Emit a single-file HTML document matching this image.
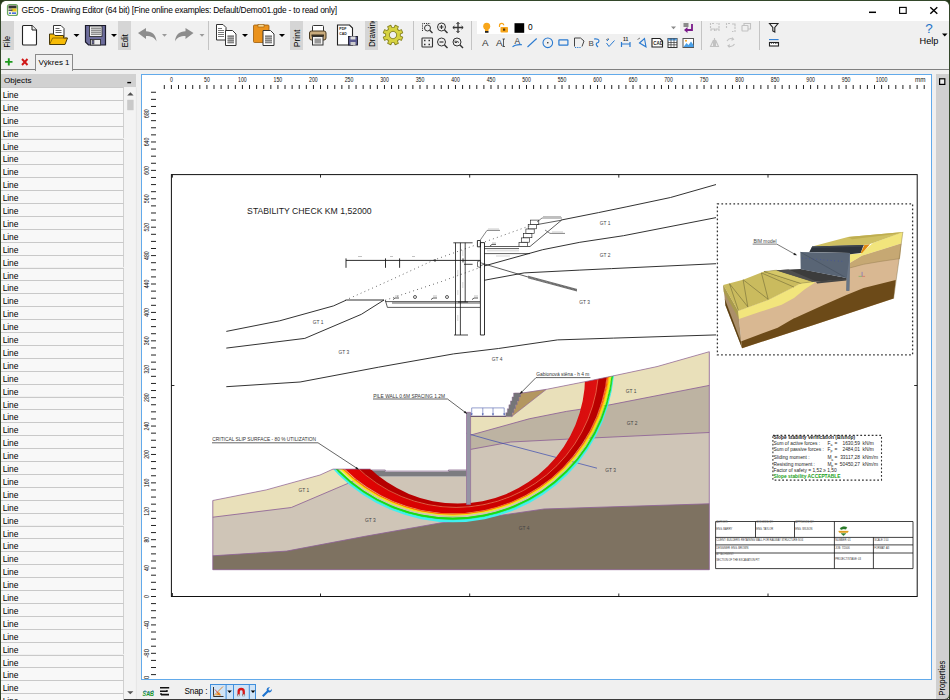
<!DOCTYPE html>
<html><head><meta charset="utf-8"><title>GEO5 - Drawing Editor</title>
<style>
html,body{margin:0;padding:0;background:#263a1a;}
body{width:950px;height:700px;overflow:hidden;font-family:"Liberation Sans",sans-serif;}
#win{position:absolute;left:0;top:0;width:950px;height:700px;overflow:hidden;}
#winbg{position:absolute;left:1px;top:1px;width:948px;height:698px;background:#f0f0f0;border-radius:5px 5px 4px 4px;}
#title{position:absolute;left:1px;top:1px;width:948px;height:20px;background:#fff;border-radius:5px 5px 0 0;}
#title .t{position:absolute;left:20.600px;top:4.300px;font-size:8.400px;letter-spacing:-0.200px;color:#000;white-space:nowrap}
.abs{position:absolute}
.vlabel{position:absolute;background:#d5d5d5;width:13px;}
.vlabel span{position:absolute;left:50%;top:50%;transform:translate(-50%,-50%) rotate(-90deg);font-size:8.2px;color:#000;white-space:nowrap;}
.sep{position:absolute;width:1px;background:#c4c4c4;}
#tabline{position:absolute;left:1px;top:68.800px;width:948px;height:1.200px;background:#808080;}
#tab{white-space:nowrap;position:absolute;left:35px;top:54px;width:36px;height:16px;background:#f1f1f1;border:1px solid #8a8a8a;border-bottom:none;font-size:8px;line-height:15.500px;text-align:center;color:#000}
#objhdr{position:absolute;left:1px;top:74px;width:135.400px;height:13.400px;background:#d1d1d1;font-size:8.100px;line-height:13px;color:#000;}
#objhdr span{position:absolute;left:3px;top:0}
#list{position:absolute;left:1px;top:0;width:124px;height:700px;}
.row{position:absolute;left:0;width:123px;height:12.9px;box-sizing:border-box;border-top:1.5px solid #c9c9c9;background:#f8f8f8;font-size:8.500px;letter-spacing:-0.150px;line-height:14.400px;padding-left:1.800px;color:#000;border-right:1px solid #d0d0d0;overflow:hidden}
#cvbox{position:absolute;left:140.500px;top:74px;width:789.400px;height:604.400px;background:#fff;border:1.5px solid #62aaea;}
#cv{position:absolute;left:0;top:0;}
.rl{font-family:"Liberation Sans",sans-serif;font-size:6.3px;fill:#111}
#props{position:absolute;left:935.5px;top:74px;width:13.5px;height:625px;background:#d0d0d0;}
#status{position:absolute;left:136px;top:681px;width:800px;height:18px;background:#f0f0f0}

</style></head><body>
<div id="win">
<div id="winbg"></div>
<div id="title"><div class="t">GEO5 - Drawing Editor (64 bit) [Fine online examples: Default/Demo01.gde - to read only]</div></div>
<div id="tabline"></div>
<div id="tab">Výkres 1</div>
<div id="objhdr"><span>Objects</span></div>
<div id="cvbox"></div>
<div id="props"></div>
<div id="status"></div>
<div class="abs" style="left:184.500px;top:686.500px;font-size:8.200px;letter-spacing:-0.150px;color:#000;white-space:nowrap">Snap :</div>
<div class="abs" style="left:209.500px;top:683.500px;width:46.500px;height:16px;background:#cfe3f6;border:1px solid #3f8edc;box-sizing:border-box"></div>
<svg class="abs" style="left:0;top:0;pointer-events:none" width="950" height="700" viewBox="0 0 950 700">
<!-- list scrollbar -->
<rect x="124" y="87.500" width="12.400" height="612" fill="#f3f3f3"/><path d="M136.400 87.500v612" stroke="#e2e2e2" stroke-width="0.800"/>
<rect x="127.200" y="99.800" width="6.400" height="10.400" fill="#c9c9c9"/>
<path d="M127.200 95.400l3.200-3.200 3.200 3.200z" fill="#505050"/>
<path d="M127.200 691.200h6.200l-3.100 3z" fill="#555"/>
<path d="M127.300 82.600h3.800" stroke="#000" stroke-width="1.400"/>
<!-- props icon -->
<rect x="939.600" y="78.800" width="5.200" height="5.600" fill="#eee" stroke="#000" stroke-width="1.200"/>
<text transform="translate(945.300 695.700) rotate(-90)" font-family="Liberation Sans" font-size="8.800" fill="#000" textLength="35" lengthAdjust="spacingAndGlyphs">Properties</text>
<!-- status icons -->
<text x="142.600" y="695.600" font-family="Liberation Sans" font-size="8" font-weight="bold" font-style="italic" fill="#1e9a2e" textLength="11.400" lengthAdjust="spacingAndGlyphs">SAB</text>
<path d="M143 692q2-2.500 4 0t4 0t3-0.500" fill="none" stroke="#2a6ab0" stroke-width="0.700"/>
<path d="M160 687.700h9.200M160 691.200h7M161 694.600h8" stroke="#111" stroke-width="1.600"/>
<circle cx="167" cy="691" r="0.900" fill="#111"/><circle cx="161" cy="694" r="0.900" fill="#111"/>
<!-- snap buttons -->
<path d="M226.100 684v15M233.500 684v15M249.300 684v15" stroke="#3f8edc" stroke-width="1"/>
<path d="M213.500 687v9.500h10" fill="none" stroke="#333" stroke-width="1"/>
<path d="M213.500 696l9.500-9.500" fill="none" stroke="#e08020" stroke-width="0.900"/><path d="M215.500 695.200l3.500-3.500 2 3.500z" fill="#f0a020"/>
<path d="M215 689.500l5 6" stroke="#d03030" stroke-width="0.700"/>
<path d="M227.300 690.500h4.600l-2.300 2.600z" fill="#000"/>
<path d="M237.500 696v-4.500a3.700 3.700 0 0 1 7.400 0v4.500h-2.300v-4.300a1.400 1.400 0 0 0-2.800 0v4.300z" fill="#d81818"/>
<rect x="237.500" y="694.300" width="2.300" height="1.700" fill="#eee" stroke="#555" stroke-width="0.300"/><rect x="242.600" y="694.300" width="2.300" height="1.700" fill="#eee" stroke="#555" stroke-width="0.300"/>
<path d="M250.700 690.500h4.600l-2.300 2.600z" fill="#000"/>
<!-- wrench -->
<path d="M262 695.500l4.800-4.800a2.600 2.600 0 0 1 3.200-3.400l-1.600 1.700 0.500 1.300 1.300 0.400 1.600-1.600a2.600 2.600 0 0 1-3.500 3.100l-4.800 4.800z" fill="#1e74d0"/>
<!-- window border -->
<rect x="0.500" y="0.500" width="949" height="699" rx="5" fill="none" stroke="#33472a" stroke-width="1"/>
<path d="M0 699.500h950" stroke="#3a3a3a" stroke-width="1"/>
</svg>

<div class="vlabel" style="left:1px;top:21px;height:29px"></div>
<div class="vlabel" style="left:118px;top:21px;height:29px"></div>
<div class="vlabel" style="left:290px;top:21px;height:29px"></div>
<div class="vlabel" style="left:365px;top:21px;height:29px;overflow:hidden"></div>
<div class="sep" style="left:208px;top:21px;height:29px"></div>
<div class="sep" style="left:413px;top:21px;height:29px"></div>
<div class="sep" style="left:471px;top:21px;height:29px"></div>
<div class="sep" style="left:701px;top:21px;height:29px"></div>
<div class="sep" style="left:759px;top:21px;height:29px"></div>
<div class="abs" style="left:477px;top:21px;width:203px;height:13px;background:#fff"></div>
<div class="abs" style="left:528px;top:22px;font-size:8.3px;color:#000">0</div>
<div class="abs" style="left:911px;top:35.5px;font-size:9.2px;color:#000;width:36px;text-align:center">Help</div>
<div class="abs" style="left:923px;top:20.5px;font-size:13.5px;color:#1e74c8;width:12px;text-align:center">?</div>
<svg class="abs" style="left:0;top:0" width="950" height="72" viewBox="0 0 950 72">
<g font-family="Liberation Sans" font-size="8.800" fill="#000"><text transform="translate(10.300 47.500) rotate(-90)" textLength="11.500" lengthAdjust="spacingAndGlyphs">File</text><text transform="translate(128 47.200) rotate(-90)" textLength="13" lengthAdjust="spacingAndGlyphs">Edit</text><text transform="translate(300 47.200) rotate(-90)" textLength="17.500" lengthAdjust="spacingAndGlyphs">Print</text><text transform="translate(375 47) rotate(-90)" textLength="29.500" lengthAdjust="spacingAndGlyphs" clip-path="url(#dclip)">Drawing</text></g>
<defs><clipPath id="dclip"><rect x="0" y="-10" width="26" height="14"/></clipPath></defs>
<!-- app icon -->
<g>
<rect x="7.5" y="4.5" width="10" height="11" rx="2" fill="#f4f4e0" stroke="#6aa860" stroke-width="1.2"/>
<rect x="8.5" y="5.5" width="8" height="3" fill="#333"/>
<rect x="11.5" y="8.5" width="5" height="3" fill="#e8c820"/>
<rect x="8.5" y="9.5" width="4" height="1.5" fill="#555"/>
<rect x="9" y="12.5" width="2" height="1.3" fill="#2050e0"/><rect x="12" y="12.5" width="4" height="1.3" fill="#2050e0"/>
</g>
<!-- window controls -->
<path d="M869 12.3h7" stroke="#000" stroke-width="1.5"/>
<rect x="899.6" y="7.4" width="6.6" height="6" fill="none" stroke="#000" stroke-width="1.1"/>
<path d="M930.3 7.2l7 6.6M937.3 7.2l-7 6.600" stroke="#000" stroke-width="1.4" fill="none"/>
<!-- new doc -->
<path d="M22.5 26.5q0-1 1-1h8.5l4.5 4.5v14q0 1-1 1h-12q-1 0-1-1z" fill="#fff" stroke="#222" stroke-width="1.1"/>
<path d="M32 25.5v4.5h4.5" fill="#eee" stroke="#222" stroke-width="1"/>
<!-- open folder -->
<path d="M53.5 37v-11.5h7.5l3 3v8.5z" fill="#fff" stroke="#333" stroke-width="1"/>
<path d="M55.5 28.5h4M55.5 30.5h6M55.5 32.5h6" stroke="#555" stroke-width="0.9"/>
<path d="M49.5 44.5v-10.5h4l1.5 1.5h8.5v2.5h4l-2.5 6.5z" fill="#f6bb06" stroke="#4a3a08" stroke-width="1"/>
<path d="M49.8 44l2.8-6h14.5" fill="none" stroke="#7a5c08" stroke-width="0.8"/>
<path d="M73.5 34h6l-3 3z" fill="#000"/>
<!-- save floppy -->
<path d="M85.5 25.5h20v19.5h-17l-3-3z" fill="#6d6d9c" stroke="#1a1a2a" stroke-width="1.2"/>
<rect x="89.5" y="26" width="12.5" height="10.5" fill="#f2f2f2" stroke="#222" stroke-width="0.8"/>
<path d="M91 28.2h10M91 30.2h10M91 32.2h10M91 34.2h10" stroke="#555" stroke-width="0.9"/>
<rect x="90.5" y="39.5" width="10" height="5.5" fill="#eee" stroke="#222" stroke-width="0.8"/>
<rect x="92" y="40.5" width="2" height="3.5" fill="#6d6d9c" stroke="#222" stroke-width="0.5"/>
<path d="M111 34h6l-3 3z" fill="#000"/>
<!-- undo -->
<path d="M138 33l8-5v3.2c6 0 10 3.5 10.500 10.200c-2-4-5-5.500-10.500-5.500v3.200z" fill="#8d8d8d"/>
<path d="M162 34h5l-2.500 2.800z" fill="#9a9a9a"/>
<!-- redo -->
<path d="M193.500 33l-8-5v3.200c-6 0-10 3.500-10.500 10.200c2-4 5-5.500 10.500-5.500v3.200z" fill="#8d8d8d"/>
<path d="M199.500 34h5l-2.500 2.800z" fill="#9a9a9a"/>
<!-- copy -->
<path d="M216.500 24.500h6.500l3 3v12.500h-9.500z" fill="#fff" stroke="#333" stroke-width="1"/>
<path d="M218 28.500h4M218 30.500h6M218 32.500h6M218 34.500h6M218 36.500h6" stroke="#555" stroke-width="0.8"/>
<path d="M225.500 30.500h7l3.500 3.500v11.500h-10.500z" fill="#fff" stroke="#333" stroke-width="1"/>
<rect x="227.500" y="35" width="6.500" height="8.500" fill="#aaa"/>
<path d="M227.500 36.500h6.500M227.500 38.500h6.500M227.500 40.500h6.500M227.500 42.500h6.500" stroke="#666" stroke-width="0.6"/>
<path d="M242 34h6l-3 3z" fill="#000"/>
<!-- paste -->
<rect x="253.500" y="25" width="15.500" height="17.500" rx="1" fill="#ea921c" stroke="#9a5c0a" stroke-width="0.8"/>
<rect x="258" y="24.500" width="6" height="2.500" fill="#f8d890" stroke="#9a5c0a" stroke-width="0.6"/>
<path d="M263 30.500h7.500l3.500 3.500v11.500h-11z" fill="#fff" stroke="#333" stroke-width="1"/>
<rect x="265" y="35" width="7" height="8.500" fill="#b0b0b0"/>
<path d="M265 36.500h7M265 38.500h7M265 40.500h7M265 42.500h7" stroke="#666" stroke-width="0.6"/>
<path d="M279 34h6l-3 3z" fill="#000"/>
<!-- printer -->
<path d="M312.500 32v-5.500q0-1 1-1h9q1 0 1 1v5.500z" fill="#fff" stroke="#333" stroke-width="1"/>
<rect x="309.500" y="31" width="16.500" height="9" rx="2" fill="#c9ab7c" stroke="#4a3a20" stroke-width="1"/>
<rect x="311.500" y="34.500" width="12.500" height="2" fill="#3a3020"/>
<rect x="312.500" y="36.500" width="10.500" height="8.500" fill="#f4f4f4" stroke="#333" stroke-width="1"/>
<rect x="314.500" y="38.500" width="6.500" height="5" fill="#999"/>
<!-- pdf cad -->
<path d="M337.500 25h12l3 3v17h-15z" fill="#fff" stroke="#222" stroke-width="1.1"/>
<text x="339.300" y="30" font-family="Liberation Sans" font-size="4.400" font-weight="bold" fill="#222" textLength="7.200" lengthAdjust="spacingAndGlyphs">PDF</text>
<text x="339.300" y="35" font-family="Liberation Sans" font-size="4.400" font-weight="bold" fill="#222" textLength="7.600" lengthAdjust="spacingAndGlyphs">CAD</text>
<rect x="348.500" y="36.500" width="9" height="8.500" fill="#5a5a90" stroke="#1a1a2a" stroke-width="0.9"/>
<rect x="350.500" y="36.500" width="5" height="3" fill="#ddd"/>
<rect x="350.500" y="42" width="5" height="3" fill="#ccc"/>
<!-- gear -->
<g transform="translate(393 35) rotate(22.5)"><path d="M7.17 -1.84L9.85 -1.72L9.85 1.72L7.17 1.84L6.37 3.77L8.18 5.75L5.75 8.18L3.77 6.37L1.84 7.17L1.72 9.85L-1.72 9.85L-1.84 7.17L-3.77 6.37L-5.75 8.18L-8.18 5.75L-6.37 3.77L-7.17 1.84L-9.85 1.72L-9.85 -1.72L-7.17 -1.84L-6.37 -3.77L-8.18 -5.75L-5.75 -8.18L-3.77 -6.37L-1.84 -7.17L-1.72 -9.85L1.72 -9.85L1.84 -7.17L3.77 -6.37L5.75 -8.18L8.18 -5.75L6.37 -3.77zM3.7 0a3.7 3.7 0 1 0 -7.4 0a3.7 3.7 0 1 0 7.4 0z" fill="#d7d340" stroke="#85811e" stroke-width="0.9" stroke-linejoin="round" fill-rule="evenodd"/></g>
<!-- view icons -->
<g fill="none" stroke="#333" stroke-width="1">
<path d="M422.500 31v-7.500h8" stroke-dasharray="1.2 1"/>
<circle cx="427.500" cy="28" r="3"/><path d="M429.700 30.200l2.800 2.800" stroke-width="1.300"/>
<circle cx="441.500" cy="27" r="4"/><path d="M444.500 30l3 3" stroke-width="1.400"/><path d="M439.500 27h4M441.500 25v4" stroke-width="1.200"/>
<path d="M458 22.500v10M453 27.500h10" stroke-width="1.300"/><path d="M456.500 24l1.500-1.700 1.500 1.700M456.500 31l1.500 1.700 1.500-1.700M454.500 26l-1.700 1.500 1.700 1.500M461.500 26l1.700 1.500-1.700 1.500" stroke-width="1"/>
<rect x="422" y="38" width="10.500" height="9" rx="0.500" stroke-width="1.100"/><path d="M424 40.500h1.500M428.500 40.500h1.500M424 44.500h1.500M428.500 44.500h1.500" stroke-width="1.300"/>
<circle cx="441.500" cy="42" r="4"/><path d="M444.500 45l3 3" stroke-width="1.400"/><path d="M439.500 42h4" stroke-width="1.200"/>
<circle cx="457" cy="42" r="4"/><path d="M460 45l3 3" stroke-width="1.400"/><path d="M455 42.500q1.500-2.500 4 0M455 40.500v2h2" stroke-width="0.900"/>
</g>
<!-- layer row -->
<circle cx="486.700" cy="26.300" r="3.500" fill="#f8a61a"/>
<rect x="485" y="29" width="3.500" height="2" fill="#f8a61a"/>
<rect x="485" y="31" width="3.500" height="1.800" fill="#222"/>
<rect x="500.500" y="27" width="7.500" height="5.500" rx="0.800" fill="#f8a61a"/>
<path d="M499.500 27v-1.500q0-2.200 2.200-2.200q2 0 2 2" fill="none" stroke="#f8a61a" stroke-width="1.200"/>
<rect x="503" y="28.500" width="2.200" height="2.200" fill="#5a3a08"/>
<rect x="514.500" y="23.200" width="9.700" height="9.600" fill="#000"/>
<path d="M671 26.500h5l-2.500 2.800z" fill="#8a8a8a"/>
<g><rect x="683.500" y="23" width="5" height="4" fill="#8a8a8a"/><path d="M692 24v6h-6" fill="none" stroke="#7a1a8a" stroke-width="1.800"/><path d="M687.500 27l-3.500 3 3.500 3z" fill="#7a1a8a"/></g>
<!-- draw row -->
<text x="482" y="46.200" font-family="Liberation Sans" font-size="9.800" fill="#333">A</text>
<text x="496" y="46.200" font-family="Liberation Sans" font-size="9.800" fill="#333">A</text>
<path d="M503.500 39v7.500M502.500 39h2.500M502.500 46.500h2.500" stroke="#333" stroke-width="0.800" fill="none"/>
<text x="514.500" y="44" font-family="Liberation Sans" font-size="8.500" fill="#333">A</text>
<path d="M512.500 47q2.500-2.800 9.500-2.300" fill="none" stroke="#2a7ad0" stroke-width="1.100"/>
<path d="M527.500 47l9.200-8.500" stroke="#2a7ad0" stroke-width="1.100"/>
<circle cx="547.800" cy="42.800" r="4.800" fill="none" stroke="#2a7ad0" stroke-width="1.100"/><circle cx="547.800" cy="42.800" r="0.800" fill="#222"/>
<rect x="558.900" y="39.800" width="9" height="5.400" rx="0.500" fill="none" stroke="#2a7ad0" stroke-width="1.200"/>
<path d="M574.500 46.500v-8.500h6l3.500 3-2 5.500" fill="none" stroke="#444" stroke-width="1"/><path d="M575 47.500h6" stroke="#2a7ad0" stroke-width="1" stroke-dasharray="1 0.800"/>
<text x="588.500" y="46" font-family="Liberation Sans" font-size="8" fill="#444">B</text>
<path d="M594 39q5-0.500 5 2q0 1.500-2.500 2.200q-1 1.500 1.500 3.800" fill="none" stroke="#2a7ad0" stroke-width="1.100"/>
<path d="M606.500 43l2.500 3.500 5.500-6M607 41l2-2" fill="none" stroke="#2a7ad0" stroke-width="1"/><path d="M606 40l2.500-1.500" stroke="#444" stroke-width="0.700"/>
<path d="M621.500 42v5M630 42v5M621.500 44h8.500" fill="none" stroke="#2a7ad0" stroke-width="1.200"/>
<text x="623" y="41" font-family="Liberation Sans" font-size="5" font-weight="bold" fill="#333">11</text>
<path d="M639.500 43l6.500 3.800-1.500-8.300z" fill="none" stroke="#2a7ad0" stroke-width="1.100"/><path d="M637.500 39.500l2.500-1.500" stroke="#444" stroke-width="0.700"/>
<path d="M652 38.500h8l2.500 2.500v6h-10.500z" fill="#fff" stroke="#222" stroke-width="1.100"/>
<text x="653.300" y="45" font-family="Liberation Sans" font-size="4.500" font-weight="bold" fill="#222">CAD</text>
<rect x="668" y="38.500" width="9" height="9" fill="#fff" stroke="#333" stroke-width="1"/>
<rect x="668" y="38.500" width="9" height="2" fill="#5aa0e0"/>
<path d="M671 38.500v9M674 38.500v9M668 42.500h9M668 44.800h9" stroke="#333" stroke-width="0.700"/>
<rect x="683" y="38.500" width="10.500" height="9" fill="#fff" stroke="#555" stroke-width="1"/>
<path d="M683.500 47l3-4 2 2 2.500-3.500 2.500 3.500v2z" fill="#4aa0e8"/><circle cx="686" cy="40.800" r="1" fill="#f0a020"/>
<!-- disabled -->
<g fill="none" stroke="#c2c2c2" stroke-width="1.100">
<path d="M710.500 28v-4.500h4.500M719 28v-4.500h-2.500" stroke-dasharray="2 1"/><path d="M711 31v-2h3.500v2M716 31v-2h3v2"/>
<path d="M726.500 28v-4.500h4.500M735 27v4.500h-3" stroke-dasharray="2 1"/><path d="M732 24l3 0 0 2.500"/>
<rect x="742" y="25.500" width="6" height="5.500" rx="0.500"/><path d="M744 25.500v-2h6.500v5.500h-2.500"/>
<path d="M714.500 38v9M713.500 40l-3 6.500h3zM715.500 40l3 6.500h-3z"/>
<path d="M727 41q2-3.500 6-2M734.500 44q-2 3.500-6 2" /><path d="M732 37.500l1.500 1.800-2 1M729.500 47.500l-1.500-1.800 2-1"/>
</g>
<!-- funnel / ruler -->
<path d="M769.500 23.500h8.500l-3.200 4v4.500l-2 -1v-3.500z" fill="none" stroke="#222" stroke-width="1.100"/>
<path d="M769 39.600h9.600" stroke="#2a7ad0" stroke-width="1.100"/>
<rect x="769.500" y="42.500" width="9" height="3.500" fill="#fff" stroke="#222" stroke-width="1.100"/>
<path d="M771.500 42.500v1.500M773.500 42.500v1.500M775.500 42.500v1.500M777 42.500v1.500" stroke="#222" stroke-width="0.600"/>
<path d="M942 33.500h5.500l-2.750 3z" fill="#000"/>
<!-- tab row icons -->
<path d="M8.800 58.200v7.400M5.100 61.900h7.400" stroke="#1e9a1e" stroke-width="1.900"/>
<path d="M22 59l5.500 6M27.500 59l-5.500 6" stroke="#d01818" stroke-width="1.900"/>
</svg>

<div id="list">
<div class="row" style="top:86.90px">Line</div>
<div class="row" style="top:99.80px">Line</div>
<div class="row" style="top:112.70px">Line</div>
<div class="row" style="top:125.60px">Line</div>
<div class="row" style="top:138.50px">Line</div>
<div class="row" style="top:151.40px">Line</div>
<div class="row" style="top:164.30px">Line</div>
<div class="row" style="top:177.20px">Line</div>
<div class="row" style="top:190.10px">Line</div>
<div class="row" style="top:203.00px">Line</div>
<div class="row" style="top:215.90px">Line</div>
<div class="row" style="top:228.80px">Line</div>
<div class="row" style="top:241.70px">Line</div>
<div class="row" style="top:254.60px">Line</div>
<div class="row" style="top:267.50px">Line</div>
<div class="row" style="top:280.40px">Line</div>
<div class="row" style="top:293.30px">Line</div>
<div class="row" style="top:306.20px">Line</div>
<div class="row" style="top:319.10px">Line</div>
<div class="row" style="top:332.00px">Line</div>
<div class="row" style="top:344.90px">Line</div>
<div class="row" style="top:357.80px">Line</div>
<div class="row" style="top:370.70px">Line</div>
<div class="row" style="top:383.60px">Line</div>
<div class="row" style="top:396.50px">Line</div>
<div class="row" style="top:409.40px">Line</div>
<div class="row" style="top:422.30px">Line</div>
<div class="row" style="top:435.20px">Line</div>
<div class="row" style="top:448.10px">Line</div>
<div class="row" style="top:461.00px">Line</div>
<div class="row" style="top:473.90px">Line</div>
<div class="row" style="top:486.80px">Line</div>
<div class="row" style="top:499.70px">Line</div>
<div class="row" style="top:512.60px">Line</div>
<div class="row" style="top:525.50px">Line</div>
<div class="row" style="top:538.40px">Line</div>
<div class="row" style="top:551.30px">Line</div>
<div class="row" style="top:564.20px">Line</div>
<div class="row" style="top:577.10px">Line</div>
<div class="row" style="top:590.00px">Line</div>
<div class="row" style="top:602.90px">Line</div>
<div class="row" style="top:615.80px">Line</div>
<div class="row" style="top:628.70px">Line</div>
<div class="row" style="top:641.60px">Line</div>
<div class="row" style="top:654.50px">Line</div>
<div class="row" style="top:667.40px">Line</div>
<div class="row" style="top:680.30px">Line</div>
<div class="row" style="top:693.20px">Line</div>
</div>
<svg id="cv" width="950" height="700" viewBox="0 0 950 700">
<defs><clipPath id="cvclip"><rect x="143" y="76" width="787" height="603"/></clipPath></defs>
<g clip-path="url(#cvclip)">
<path d="M164.30 85v4 M171.40 85v4 M178.50 85v4 M185.60 85v4 M192.71 85v4 M199.81 85v4 M206.91 85v4 M214.01 85v4 M221.11 85v4 M228.22 85v4 M235.32 85v4 M242.42 85v4 M249.52 85v4 M256.62 85v4 M263.73 85v4 M270.83 85v4 M277.93 85v4 M285.03 85v4 M292.13 85v4 M299.24 85v4 M306.34 85v4 M313.44 85v4 M320.54 85v4 M327.64 85v4 M334.75 85v4 M341.85 85v4 M348.95 85v4 M356.05 85v4 M363.15 85v4 M370.26 85v4 M377.36 85v4 M384.46 85v4 M391.56 85v4 M398.66 85v4 M405.77 85v4 M412.87 85v4 M419.97 85v4 M427.07 85v4 M434.17 85v4 M441.28 85v4 M448.38 85v4 M455.48 85v4 M462.58 85v4 M469.68 85v4 M476.79 85v4 M483.89 85v4 M490.99 85v4 M498.09 85v4 M505.19 85v4 M512.30 85v4 M519.40 85v4 M526.50 85v4 M533.60 85v4 M540.70 85v4 M547.81 85v4 M554.91 85v4 M562.01 85v4 M569.11 85v4 M576.21 85v4 M583.32 85v4 M590.42 85v4 M597.52 85v4 M604.62 85v4 M611.72 85v4 M618.83 85v4 M625.93 85v4 M633.03 85v4 M640.13 85v4 M647.23 85v4 M654.34 85v4 M661.44 85v4 M668.54 85v4 M675.64 85v4 M682.74 85v4 M689.85 85v4 M696.95 85v4 M704.05 85v4 M711.15 85v4 M718.25 85v4 M725.36 85v4 M732.46 85v4 M739.56 85v4 M746.66 85v4 M753.76 85v4 M760.87 85v4 M767.97 85v4 M775.07 85v4 M782.17 85v4 M789.27 85v4 M796.38 85v4 M803.48 85v4 M810.58 85v4 M817.68 85v4 M824.78 85v4 M831.89 85v4 M838.99 85v4 M846.09 85v4 M853.19 85v4 M860.29 85v4 M867.40 85v4 M874.50 85v4 M881.60 85v4 M888.70 85v4 M895.80 85v4 M902.91 85v4 M910.01 85v4 M917.11 85v4 M924.21 85v4" stroke="#222" stroke-width="1" fill="none"/>
<text x="171.4" y="82.3" text-anchor="middle" class="rl" textLength="2.9" lengthAdjust="spacingAndGlyphs">0</text>
<text x="206.9" y="82.3" text-anchor="middle" class="rl" textLength="5.8" lengthAdjust="spacingAndGlyphs">50</text>
<text x="242.4" y="82.3" text-anchor="middle" class="rl" textLength="8.7" lengthAdjust="spacingAndGlyphs">100</text>
<text x="277.9" y="82.3" text-anchor="middle" class="rl" textLength="8.7" lengthAdjust="spacingAndGlyphs">150</text>
<text x="313.4" y="82.3" text-anchor="middle" class="rl" textLength="8.7" lengthAdjust="spacingAndGlyphs">200</text>
<text x="349.0" y="82.3" text-anchor="middle" class="rl" textLength="8.7" lengthAdjust="spacingAndGlyphs">250</text>
<text x="384.5" y="82.3" text-anchor="middle" class="rl" textLength="8.7" lengthAdjust="spacingAndGlyphs">300</text>
<text x="420.0" y="82.3" text-anchor="middle" class="rl" textLength="8.7" lengthAdjust="spacingAndGlyphs">350</text>
<text x="455.5" y="82.3" text-anchor="middle" class="rl" textLength="8.7" lengthAdjust="spacingAndGlyphs">400</text>
<text x="491.0" y="82.3" text-anchor="middle" class="rl" textLength="8.7" lengthAdjust="spacingAndGlyphs">450</text>
<text x="526.5" y="82.3" text-anchor="middle" class="rl" textLength="8.7" lengthAdjust="spacingAndGlyphs">500</text>
<text x="562.0" y="82.3" text-anchor="middle" class="rl" textLength="8.7" lengthAdjust="spacingAndGlyphs">550</text>
<text x="597.5" y="82.3" text-anchor="middle" class="rl" textLength="8.7" lengthAdjust="spacingAndGlyphs">600</text>
<text x="633.0" y="82.3" text-anchor="middle" class="rl" textLength="8.7" lengthAdjust="spacingAndGlyphs">650</text>
<text x="668.5" y="82.3" text-anchor="middle" class="rl" textLength="8.7" lengthAdjust="spacingAndGlyphs">700</text>
<text x="704.1" y="82.3" text-anchor="middle" class="rl" textLength="8.7" lengthAdjust="spacingAndGlyphs">750</text>
<text x="739.6" y="82.3" text-anchor="middle" class="rl" textLength="8.7" lengthAdjust="spacingAndGlyphs">800</text>
<text x="775.1" y="82.3" text-anchor="middle" class="rl" textLength="8.7" lengthAdjust="spacingAndGlyphs">850</text>
<text x="810.6" y="82.3" text-anchor="middle" class="rl" textLength="8.7" lengthAdjust="spacingAndGlyphs">900</text>
<text x="846.1" y="82.3" text-anchor="middle" class="rl" textLength="8.7" lengthAdjust="spacingAndGlyphs">950</text>
<text x="881.6" y="82.3" text-anchor="middle" class="rl" textLength="11.6" lengthAdjust="spacingAndGlyphs">1000</text>
<text x="920.3" y="82.3" text-anchor="middle" class="rl" textLength="10.5" lengthAdjust="spacingAndGlyphs">mm</text>
<path d="M151 674.62h5 M151 667.52h5 M151 660.42h5 M151 653.32h5 M151 646.21h5 M151 639.11h5 M151 632.01h5 M151 624.91h5 M151 617.81h5 M151 610.70h5 M151 603.60h5 M151 596.50h5 M151 589.40h5 M151 582.30h5 M151 575.19h5 M151 568.09h5 M151 560.99h5 M151 553.89h5 M151 546.79h5 M151 539.68h5 M151 532.58h5 M151 525.48h5 M151 518.38h5 M151 511.28h5 M151 504.17h5 M151 497.07h5 M151 489.97h5 M151 482.87h5 M151 475.77h5 M151 468.66h5 M151 461.56h5 M151 454.46h5 M151 447.36h5 M151 440.26h5 M151 433.15h5 M151 426.05h5 M151 418.95h5 M151 411.85h5 M151 404.75h5 M151 397.64h5 M151 390.54h5 M151 383.44h5 M151 376.34h5 M151 369.24h5 M151 362.13h5 M151 355.03h5 M151 347.93h5 M151 340.83h5 M151 333.73h5 M151 326.62h5 M151 319.52h5 M151 312.42h5 M151 305.32h5 M151 298.22h5 M151 291.11h5 M151 284.01h5 M151 276.91h5 M151 269.81h5 M151 262.71h5 M151 255.60h5 M151 248.50h5 M151 241.40h5 M151 234.30h5 M151 227.20h5 M151 220.09h5 M151 212.99h5 M151 205.89h5 M151 198.79h5 M151 191.69h5 M151 184.58h5 M151 177.48h5 M151 170.38h5 M151 163.28h5 M151 156.18h5 M151 149.07h5 M151 141.97h5 M151 134.87h5 M151 127.77h5 M151 120.67h5 M151 113.56h5 M151 106.46h5 M151 99.36h5 M151 92.26h5" stroke="#222" stroke-width="1" fill="none"/>
<text transform="translate(149.300 681.7) rotate(-90)" text-anchor="middle" class="rl" textLength="11.6" lengthAdjust="spacingAndGlyphs">-120</text>
<text transform="translate(149.300 653.3) rotate(-90)" text-anchor="middle" class="rl" textLength="8.7" lengthAdjust="spacingAndGlyphs">-80</text>
<text transform="translate(149.300 624.9) rotate(-90)" text-anchor="middle" class="rl" textLength="8.7" lengthAdjust="spacingAndGlyphs">-40</text>
<text transform="translate(149.300 596.5) rotate(-90)" text-anchor="middle" class="rl" textLength="2.9" lengthAdjust="spacingAndGlyphs">0</text>
<text transform="translate(149.300 568.1) rotate(-90)" text-anchor="middle" class="rl" textLength="5.8" lengthAdjust="spacingAndGlyphs">40</text>
<text transform="translate(149.300 539.7) rotate(-90)" text-anchor="middle" class="rl" textLength="5.8" lengthAdjust="spacingAndGlyphs">80</text>
<text transform="translate(149.300 511.3) rotate(-90)" text-anchor="middle" class="rl" textLength="8.7" lengthAdjust="spacingAndGlyphs">120</text>
<text transform="translate(149.300 482.9) rotate(-90)" text-anchor="middle" class="rl" textLength="8.7" lengthAdjust="spacingAndGlyphs">160</text>
<text transform="translate(149.300 454.5) rotate(-90)" text-anchor="middle" class="rl" textLength="8.7" lengthAdjust="spacingAndGlyphs">200</text>
<text transform="translate(149.300 426.1) rotate(-90)" text-anchor="middle" class="rl" textLength="8.7" lengthAdjust="spacingAndGlyphs">240</text>
<text transform="translate(149.300 397.6) rotate(-90)" text-anchor="middle" class="rl" textLength="8.7" lengthAdjust="spacingAndGlyphs">280</text>
<text transform="translate(149.300 369.2) rotate(-90)" text-anchor="middle" class="rl" textLength="8.7" lengthAdjust="spacingAndGlyphs">320</text>
<text transform="translate(149.300 340.8) rotate(-90)" text-anchor="middle" class="rl" textLength="8.7" lengthAdjust="spacingAndGlyphs">360</text>
<text transform="translate(149.300 312.4) rotate(-90)" text-anchor="middle" class="rl" textLength="8.7" lengthAdjust="spacingAndGlyphs">400</text>
<text transform="translate(149.300 284.0) rotate(-90)" text-anchor="middle" class="rl" textLength="8.7" lengthAdjust="spacingAndGlyphs">440</text>
<text transform="translate(149.300 255.6) rotate(-90)" text-anchor="middle" class="rl" textLength="8.7" lengthAdjust="spacingAndGlyphs">480</text>
<text transform="translate(149.300 227.2) rotate(-90)" text-anchor="middle" class="rl" textLength="8.7" lengthAdjust="spacingAndGlyphs">520</text>
<text transform="translate(149.300 198.8) rotate(-90)" text-anchor="middle" class="rl" textLength="8.7" lengthAdjust="spacingAndGlyphs">560</text>
<text transform="translate(149.300 170.4) rotate(-90)" text-anchor="middle" class="rl" textLength="8.7" lengthAdjust="spacingAndGlyphs">600</text>
<text transform="translate(149.300 142.0) rotate(-90)" text-anchor="middle" class="rl" textLength="8.7" lengthAdjust="spacingAndGlyphs">640</text>
<text transform="translate(149.300 113.6) rotate(-90)" text-anchor="middle" class="rl" textLength="8.7" lengthAdjust="spacingAndGlyphs">680</text>
<rect x="171.4" y="174.6" width="745.8" height="421.9" fill="none" stroke="#111" stroke-width="1"/>
<path d="M320.5 174.6v3M469.7 174.6v3M618.8 174.6v3M768 174.6v3M320.5 596.5v-3M469.7 596.5v-3M618.8 596.5v-3M768 596.5v-3M171.4 385.5h3M917.2 385.5h-3M172.4 593v3.5M172.400 174.600v3" fill="none" stroke="#111" stroke-width="0.9" />
<text x="247.1" y="213.9" font-family="Liberation Sans" font-size="8.68" fill="#1a1a1a" text-anchor="start" font-weight="normal" >STABILITY CHECK KM 1,52000</text>
<defs><clipPath id="bodyclip"><polygon points="212.8,500.5 266.2,489.9 320.0,475.0 333.0,469.1 370.5,469.1 370.5,470.0 466.5,470.0 466.5,412.3 470.6,412.3 470.6,416.6 505.5,416.6 515.3,392.8 520.9,392.8 547.8,389.1 585.0,381.7 612.6,376.0 657.0,366.6 709.3,351.7 709.3,569.7 212.8,569.7"/></clipPath></defs>
<polygon points="212.8,500.5 266.2,489.9 320.0,475.0 333.0,469.1 370.5,469.1 370.5,476.6 466.5,476.6 466.5,412.3 470.6,412.3 470.6,416.6 505.5,416.6 515.3,392.8 520.9,392.8 547.8,389.1 585.0,381.7 612.6,376.0 657.0,366.6 709.3,351.7 709.3,569.7 212.8,569.7" fill="#cfc5b7" stroke="none" stroke-width="0.6" stroke-linejoin="round" />
<polygon points="212.8,500.5 266.2,489.9 320.0,475.0 333.0,469.1 370.5,469.1 370.5,476.6 362.0,476.6 347.9,483.4 291.3,507.5 212.8,517.2" fill="#e9e0ba" stroke="none" stroke-width="0.6" stroke-linejoin="round" />
<polygon points="470.6,416.6 511.6,416.6 546.0,390.0 547.8,389.1 585.0,381.7 612.6,376.0 657.0,366.6 709.3,351.7 709.3,385.4 610.0,404.8 566.3,411.4 529.2,418.8 470.6,435.1" fill="#e9e0ba" stroke="none" stroke-width="0.6" stroke-linejoin="round" />
<polygon points="470.6,435.1 529.2,418.8 566.3,411.4 610.0,404.8 709.3,385.4 709.3,432.5 598.0,437.7 566.3,439.2 510.7,442.0 470.6,449.4" fill="#bdb3a2" stroke="none" stroke-width="0.6" stroke-linejoin="round" />
<polygon points="212.8,555.8 286.6,551.1 365.0,536.3 440.0,523.0 485.0,517.6 544.0,509.0 600.0,507.2 709.3,503.8 709.3,569.7 212.8,569.7" fill="#7e7261" stroke="none" stroke-width="0.6" stroke-linejoin="round" />
<polygon points="511.6,416.6 520.9,393.3 546.0,389.6" fill="#b39660" stroke="none" stroke-width="0.6" stroke-linejoin="round" />
<polyline points="212.8,517.2 291.3,507.5 347.9,483.4 362.0,476.6" fill="none" stroke="#8e6296" stroke-width="0.85" stroke-linejoin="round" />
<polyline points="212.8,555.8 286.6,551.1 365.0,536.3 440.0,523.0 485.0,517.6 544.0,509.0 600.0,507.2 709.3,503.8" fill="none" stroke="#8e6296" stroke-width="0.85" stroke-linejoin="round" />
<polyline points="470.6,435.1 529.2,418.8 566.3,411.4 610.0,404.8 709.3,385.4" fill="none" stroke="#8e6296" stroke-width="0.85" stroke-linejoin="round" />
<polyline points="470.6,449.4 510.7,442.0 566.3,439.2 598.0,437.7 709.3,432.5" fill="none" stroke="#8e6296" stroke-width="0.85" stroke-linejoin="round" />
<polyline points="511.6,416.6 546.0,389.6" fill="none" stroke="#8e6296" stroke-width="0.6" stroke-linejoin="round" />
<polyline points="466.5,433.3 490.0,440.0 597.0,468.2" fill="none" stroke="#3a4ab0" stroke-width="0.7" stroke-linejoin="round" />
<polygon points="370.5,470.6 385.3,470.6 385.3,471.7 448.4,471.7 448.4,470.6 466.5,470.6 466.5,476.6 370.5,476.6" fill="#7c7c80" stroke="none" stroke-width="0.6" stroke-linejoin="round" />
<polyline points="370.5,470.0 385.3,470.0 385.3,471.1 448.4,471.1 448.4,470.0 466.5,470.0" fill="none" stroke="#8a6a90" stroke-width="0.8" stroke-linejoin="round" />
<defs><linearGradient id="rg1" gradientUnits="userSpaceOnUse" x1="350" y1="0" x2="600" y2="0"><stop offset="0" stop-color="#b20000"/><stop offset="0.45" stop-color="#bc0000"/><stop offset="1" stop-color="#de1010"/></linearGradient><linearGradient id="rg2" gradientUnits="userSpaceOnUse" x1="340" y1="0" x2="610" y2="0"><stop offset="0" stop-color="#e20404"/><stop offset="0.5" stop-color="#d00000"/><stop offset="1" stop-color="#b60000"/></linearGradient></defs>
<g clip-path="url(#bodyclip)">
<path d="M291.19 359.27a161.73 161.73 0 1 0 323.45 0a161.73 161.73 0 1 0 -323.45 0zM291.47 358.55a161.37 161.37 0 1 0 322.74 0a161.37 161.37 0 1 0 -322.74 0z" fill="#40f0f0" fill-rule="evenodd"/>
<path d="M291.40 358.74a161.46 161.46 0 1 0 322.93 0a161.46 161.46 0 1 0 -322.93 0zM291.65 358.06a161.14 161.14 0 1 0 322.29 0a161.14 161.14 0 1 0 -322.29 0z" fill="#30e8c0" fill-rule="evenodd"/>
<path d="M291.58 358.25a161.23 161.23 0 1 0 322.47 0a161.23 161.23 0 1 0 -322.47 0zM292.20 357.35a160.57 160.57 0 1 0 321.15 0a160.57 160.57 0 1 0 -321.15 0z" fill="#10d830" fill-rule="evenodd"/>
<path d="M292.09 357.50a160.69 160.69 0 1 0 321.37 0a160.69 160.69 0 1 0 -321.37 0zM292.85 356.45a159.89 159.89 0 1 0 319.77 0a159.89 159.89 0 1 0 -319.77 0z" fill="#1cdc10" fill-rule="evenodd"/>
<path d="M292.75 356.59a159.99 159.99 0 1 0 319.99 0a159.99 159.99 0 1 0 -319.99 0zM293.32 356.03a159.40 159.40 0 1 0 318.79 0a159.40 159.40 0 1 0 -318.79 0z" fill="#70e400" fill-rule="evenodd"/>
<path d="M293.12 356.04a159.59 159.59 0 1 0 319.19 0a159.59 159.59 0 1 0 -319.19 0zM294.10 356.05a158.61 158.61 0 1 0 317.22 0a158.61 158.61 0 1 0 -317.22 0z" fill="#f4f400" fill-rule="evenodd"/>
<path d="M293.90 356.05a158.82 158.82 0 1 0 317.64 0a158.82 158.82 0 1 0 -317.64 0zM294.98 356.08a157.72 157.72 0 1 0 315.44 0a157.72 157.72 0 1 0 -315.44 0z" fill="#ffd800" fill-rule="evenodd"/>
<path d="M294.78 356.07a157.93 157.93 0 1 0 315.86 0a157.93 157.93 0 1 0 -315.86 0zM296.21 356.41a156.59 156.59 0 1 0 313.17 0a156.59 156.59 0 1 0 -313.17 0z" fill="#ffa000" fill-rule="evenodd"/>
<path d="M295.95 356.34a156.83 156.83 0 1 0 313.65 0a156.83 156.83 0 1 0 -313.65 0zM297.43 356.74a155.46 155.46 0 1 0 310.91 0a155.46 155.46 0 1 0 -310.91 0z" fill="#ff6400" fill-rule="evenodd"/>
<path d="M297.18 356.67a155.69 155.69 0 1 0 311.39 0a155.69 155.69 0 1 0 -311.39 0zM298.74 357.40a154.41 154.41 0 1 0 308.81 0a154.41 154.41 0 1 0 -308.81 0z" fill="#f02800" fill-rule="evenodd"/>
<path d="M298.31 357.18a154.76 154.76 0 1 0 309.51 0a154.76 154.76 0 1 0 -309.51 0zM314.06 365.17a142.11 142.11 0 1 0 284.22 0a142.11 142.11 0 1 0 -284.22 0z" fill="url(#rg2)" fill-rule="evenodd"/>
<path d="M313.10 364.60a142.93 142.93 0 1 0 285.87 0a142.93 142.93 0 1 0 -285.87 0zM330.26 376.17a127.43 127.43 0 1 0 254.86 0a127.43 127.43 0 1 0 -254.86 0z" fill="url(#rg1)" fill-rule="evenodd"/>
<circle cx="456.1" cy="364.8" r="142.6" fill="none" stroke="#f09868" stroke-width="0.55"/>
</g>
<polyline points="212.8,500.5 266.2,489.9 320.0,475.0 333.0,469.1 370.5,469.1" fill="none" stroke="#8e6296" stroke-width="0.7" stroke-linejoin="round" />
<polyline points="212.8,500.5 212.8,569.7 709.3,569.7 709.3,351.7" fill="none" stroke="#8e6296" stroke-width="0.8" stroke-linejoin="round" />
<polyline points="520.9,393.3 547.8,389.1 585.0,381.7 612.6,376.0 657.0,366.6 709.3,351.7" fill="none" stroke="#8e6296" stroke-width="0.7" stroke-linejoin="round" />
<polygon points="466.5,412.3 470.6,412.3 470.6,504.6 466.5,504.6" fill="#9494a4" stroke="#8e6296" stroke-width="0.6" stroke-linejoin="round" />
<polyline points="470.6,416.4 506.0,416.4" fill="none" stroke="#6e5a72" stroke-width="1.4" stroke-linejoin="round" />
<polygon points="505.8,416.6 505.8,412.7 507.4,412.7 507.4,408.7 508.9,408.7 508.9,404.8 510.5,404.8 510.5,400.9 512.1,400.9 512.1,396.9 513.6,396.9 513.6,393.0 515.2,393.0 522.2,393.0 520.5,393.0 520.5,396.9 518.9,396.9 518.9,400.9 517.2,400.9 517.2,404.8 515.5,404.8 515.5,408.7 513.9,408.7 513.9,412.7 512.2,412.7 512.2,416.6" fill="#757578" stroke="#8e6296" stroke-width="0.4" stroke-linejoin="round" />
<path d="M471.7 415.2v-7.3h32.5v7.3M482.8 407.9v7.3M493 407.9v7.3" fill="none" stroke="#5c6cb4" stroke-width="0.65" />
<path d="M470.9 413.6l0.8 1.900 0.800-1.900zM482 413.600l0.800 1.900 0.800-1.900zM492.200 413.600l0.800 1.900 0.800-1.900zM503.400 413.600l0.800 1.900 0.800-1.900z" fill="#4c5cb0" stroke="#4c5cb0" stroke-width="0.2" />
<path d="M212 442.8H318L358.3 469.2" fill="none" stroke="#222" stroke-width="0.7" />
<path d="M358.3 469.2L355.63 468.53L356.62 467.02z" fill="#111" stroke="#111" stroke-width="0.3" />
<text x="212.3" y="441.4" font-family="Liberation Sans" font-size="4.85" fill="#333" text-anchor="start" font-weight="normal" >CRITICAL SLIP SURFACE - 80 % UTILIZATION</text>
<path d="M373 399H447.5L466.6 413.4" fill="none" stroke="#222" stroke-width="0.7" />
<path d="M466.6 413.4L463.98 412.55L465.07 411.12z" fill="#111" stroke="#111" stroke-width="0.3" />
<text x="373.3" y="397.6" font-family="Liberation Sans" font-size="4.85" fill="#333" text-anchor="start" font-weight="normal" >PILE WALL 0.6M SPACING 1.2M</text>
<path d="M590.4 377.6H536L520.2 393.6" fill="none" stroke="#222" stroke-width="0.7" />
<path d="M520.2 393.6L521.39 391.12L522.67 392.38z" fill="#111" stroke="#111" stroke-width="0.3" />
<text x="536.3" y="376.2" font-family="Liberation Sans" font-size="4.85" fill="#333" text-anchor="start" font-weight="normal" >Gabionová stěna - h 4 m</text>
<text x="303.8" y="491.7" font-family="Liberation Sans" font-size="4.85" fill="#444" text-anchor="middle" font-weight="normal" >GT 1</text>
<text x="370.3" y="521.7" font-family="Liberation Sans" font-size="4.85" fill="#444" text-anchor="middle" font-weight="normal" >GT 3</text>
<text x="524.0" y="529.5" font-family="Liberation Sans" font-size="4.85" fill="#444" text-anchor="middle" font-weight="normal" >GT 4</text>
<text x="631.0" y="393.2" font-family="Liberation Sans" font-size="4.85" fill="#444" text-anchor="middle" font-weight="normal" >GT 1</text>
<text x="632.0" y="424.7" font-family="Liberation Sans" font-size="4.85" fill="#444" text-anchor="middle" font-weight="normal" >GT 2</text>
<text x="610.7" y="472.0" font-family="Liberation Sans" font-size="4.85" fill="#444" text-anchor="middle" font-weight="normal" >GT 3</text>
<defs><clipPath id="upclip"><rect x="220" y="176" width="495.900" height="215"/></clipPath></defs>
<g clip-path="url(#upclip)">
<polyline points="226.3,331.4 279.7,320.8 333.5,305.9 346.5,300.0 384.0,300.0" fill="none" stroke="#161616" stroke-width="0.88" stroke-linejoin="round" />
<polyline points="226.3,348.1 304.8,338.4 361.4,314.3 384.0,300.0" fill="none" stroke="#161616" stroke-width="0.88" stroke-linejoin="round" />
<polyline points="226.3,386.7 300.1,382.0 378.5,367.2 453.5,353.9 498.5,348.5 557.5,339.9 613.5,338.1 722.8,334.7" fill="none" stroke="#161616" stroke-width="0.88" stroke-linejoin="round" />
<polyline points="484.1,266.0 542.7,249.7 579.8,242.3 623.5,235.7 722.8,216.3" fill="none" stroke="#161616" stroke-width="0.88" stroke-linejoin="round" />
<polyline points="484.1,280.3 524.2,272.9 579.8,270.1 611.5,268.6 722.8,263.4" fill="none" stroke="#161616" stroke-width="0.88" stroke-linejoin="round" />
<polyline points="561.3,220.0 598.5,212.6 626.1,206.9 670.5,197.5 722.8,182.6" fill="none" stroke="#161616" stroke-width="0.88" stroke-linejoin="round" />
</g>
<path d="M385.3 300.2l2.1 7.2H480M385.3 301.6H480M392 303H480" fill="none" stroke="#161616" stroke-width="0.7" />
<path d="M480.400 242.600V335M484.500 242.600V335M480.400 335h4.100M480.400 242.600h4.100M477.400 240.500h3v6.300h-3z" fill="none" stroke="#161616" stroke-width="0.88" />
<path d="M484.4 246.5H530M484.4 248.6H519M484.4 253.6H530" fill="none" stroke="#161616" stroke-width="0.7" />
<rect x="519.0" y="242.3" width="8.3" height="4.3" fill="#fff" stroke="#161616" stroke-width="0.6"/>
<rect x="521.3" y="237.9" width="8.3" height="4.3" fill="#fff" stroke="#161616" stroke-width="0.6"/>
<rect x="523.6" y="233.4" width="8.3" height="4.3" fill="#fff" stroke="#161616" stroke-width="0.6"/>
<rect x="525.9" y="229.0" width="8.3" height="4.3" fill="#fff" stroke="#161616" stroke-width="0.6"/>
<rect x="528.2" y="224.5" width="8.3" height="4.3" fill="#fff" stroke="#161616" stroke-width="0.6"/>
<rect x="530.5" y="220.1" width="8.3" height="4.3" fill="#fff" stroke="#161616" stroke-width="0.6"/>
<path d="M530 246.5L561.5 220.2" fill="none" stroke="#161616" stroke-width="0.7" />
<path d="M537 224.6L561.5 220.2" fill="none" stroke="#161616" stroke-width="0.7" />
<path d="M346 260.400H480.400M346 258.4v9.4M385.5 258.4v9.4M399.6 258.4v9.4M435 259v2.800M463 258.400v4" fill="none" stroke="#161616" stroke-width="0.9" />
<path d="M455.500 242.800V335M460.400 242.800V335M465.200 242.800V302M453.300 242.800h19.300M454 335h14M458 302h10M464 264.300h8.600" fill="none" stroke="#161616" stroke-width="0.8" />
<path d="M345.3 300.2L388.4 281L434 260L474 245.6M485 241.8L530.4 225.6M385.3 300.2L441.3 281.6L478 268.2" fill="none" stroke="#161616" stroke-width="0.7" stroke-dasharray="0.900 3.300"/>
<path d="M393 299.6l2-1.6h4M431 299.6l2-1.6h4M472 299.6l2-1.6h4M490 246l2-1.6h4" fill="none" stroke="#111" stroke-width="0.7" />
<circle cx="415" cy="297" r="1.5" fill="none" stroke="#161616" stroke-width="0.7"/><circle cx="447" cy="297" r="1.5" fill="none" stroke="#161616" stroke-width="0.7"/>
<path d="M358 256.5h4M390 256.5h3M412 256.5h3M395 296h4M433 296h4M474 296h4M492 243h4" fill="none" stroke="#999" stroke-width="0.6" />
<path d="M457.8 270v6M457.8 290v5M462.8 250v6M462.8 282v6M457.8 315v6" fill="none" stroke="#aaa" stroke-width="0.5" />
<path d="M479.6 241L487 230.4H500" fill="none" stroke="#333" stroke-width="0.6" />
<path d="M488 229h11" fill="none" stroke="#aaa" stroke-width="0.6" />
<path d="M537 222L542 218H562" fill="none" stroke="#333" stroke-width="0.6" />
<path d="M543 216.6h18" fill="none" stroke="#999" stroke-width="0.7" />
<path d="M545 230L550 233.400H565" fill="none" stroke="#333" stroke-width="0.6" />
<path d="M552 232h11" fill="none" stroke="#aaa" stroke-width="0.6" />
<path d="M487 250.800h32M496 256h14" fill="none" stroke="#aaa" stroke-width="0.5" />
<path d="M484.4 264L528 277" fill="none" stroke="#161616" stroke-width="0.7" />
<path d="M528 276.2L577 289.4M528 277.800L577 291M528 277L577 290.200" fill="none" stroke="#161616" stroke-width="0.6" />
<path d="M528 276.500l3 2.500 3-1 3 2.500 3-1 3 2.500 3-1 3 2.500 3-1" fill="none" stroke="#888" stroke-width="0.5" />
<path d="M477.5 261.600l3-1v7l-3-1zM480 262.500l4.400 1.500-4.400 2" fill="none" stroke="#161616" stroke-width="0.6" />
<text x="318.0" y="323.6" font-family="Liberation Sans" font-size="4.85" fill="#444" text-anchor="middle" font-weight="normal" >GT 1</text>
<text x="343.8" y="353.6" font-family="Liberation Sans" font-size="4.85" fill="#444" text-anchor="middle" font-weight="normal" >GT 3</text>
<text x="605.0" y="225.2" font-family="Liberation Sans" font-size="4.85" fill="#444" text-anchor="middle" font-weight="normal" >GT 1</text>
<text x="605.0" y="256.6" font-family="Liberation Sans" font-size="4.85" fill="#444" text-anchor="middle" font-weight="normal" >GT 2</text>
<text x="584.6" y="303.6" font-family="Liberation Sans" font-size="4.85" fill="#444" text-anchor="middle" font-weight="normal" >GT 3</text>
<text x="497.0" y="360.6" font-family="Liberation Sans" font-size="4.85" fill="#444" text-anchor="middle" font-weight="normal" >GT 4</text>
<rect x="717.4" y="203.800" width="195.2" height="151" fill="none" stroke="#333" stroke-width="1.300" stroke-dasharray="1.700 2.300"/>
<polygon points="738.1,310.9 768.2,300.0 794.0,287.1 800.7,283.3 812.9,281.7 816.4,281.4 846.4,280.0 850.0,262.9 862.1,255.7 880.7,250.0 901.4,243.6 902.9,231.9 893.6,298.6 813.6,325.0 742.1,348.2" fill="#d9b892" stroke="none" stroke-width="0.6" stroke-linejoin="round" />
<polygon points="740.8,341.4 777.7,327.8 794.0,318.3 795.0,317.9 823.6,305.0 846.4,295.0 863.6,287.9 895.7,280.0 893.6,298.6 813.6,325.0 742.1,348.2" fill="#6c4a18" stroke="none" stroke-width="0.6" stroke-linejoin="round" />
<polygon points="723.2,285.1 738.1,310.9 742.1,348.2 725.5,305.4" fill="#ab8f69" stroke="none" stroke-width="0.6" stroke-linejoin="round" />
<polygon points="723.2,285.1 738.1,310.9 739.0,319.0 723.7,291.9" fill="#a99b4d" stroke="none" stroke-width="0.6" stroke-linejoin="round" />
<polygon points="724.8,298.7 740.8,341.4 742.1,348.2 725.5,305.4" fill="#5c4012" stroke="none" stroke-width="0.6" stroke-linejoin="round" />
<polygon points="738.1,310.9 768.2,300.0 794.0,287.1 800.7,283.3 812.9,281.7 815.0,282.4 804.8,289.2 794.0,298.0 781.7,304.8 758.7,312.2 739.0,319.0" fill="#f2e57c" stroke="none" stroke-width="0.6" stroke-linejoin="round" />
<polygon points="723.2,285.1 743.1,279.7 764.1,271.5 776.3,270.2 812.9,281.7 800.7,283.3 794.0,287.1 768.2,300.0 738.1,310.9" fill="#cabb5e" stroke="none" stroke-width="0.6" stroke-linejoin="round" />
<path d="M729.5 283.7L738.3 310.2M743.1 279.7L747.8 306.8L729.5 283.7M761.4 272.9L768.2 299.3L743.1 279.7M761.4 272.9L794.0 287.1M764.1 271.5L800.7 283.3" fill="none" stroke="#55502a" stroke-width="0.45" />
<polygon points="764.1,271.5 776.3,270.2 812.9,281.7 800.7,283.3" fill="#d6c868" stroke="#55502a" stroke-width="0.3" stroke-linejoin="round" />
<polygon points="776.3,270.2 795.0,269.3 800.7,269.0 846.7,278.1 846.4,280.0 816.4,281.4 812.9,281.7" fill="#3c3c3c" stroke="none" stroke-width="0.6" stroke-linejoin="round" />
<polygon points="776.3,270.2 788.5,269.5 816.4,281.4 812.9,281.7" fill="#4e4e4e" stroke="none" stroke-width="0.6" stroke-linejoin="round" />
<polygon points="815.7,281.4 846.7,278.7 846.4,280.4 817.1,283.6" fill="#454545" stroke="none" stroke-width="0.6" stroke-linejoin="round" />
<polygon points="850.0,254.3 860.7,253.6 872.9,242.9 902.9,231.9 901.4,243.6 880.7,250.0 862.1,255.7 850.0,262.9" fill="#f2e57c" stroke="none" stroke-width="0.6" stroke-linejoin="round" />
<polygon points="850.0,262.9 862.1,255.7 880.7,250.0 901.4,243.6 900.0,258.6 880.7,261.4 863.6,264.3 850.0,267.9" fill="#c6a873" stroke="none" stroke-width="0.6" stroke-linejoin="round" />
<polyline points="850.0,267.9 863.6,264.3 880.7,261.4 900.0,258.6" fill="none" stroke="#8a7448" stroke-width="0.4" stroke-linejoin="round" />
<polygon points="812.1,246.4 847.9,237.1 903.6,231.9 872.9,242.9 869.3,244.3 863.6,245.0" fill="#cfc062" stroke="none" stroke-width="0.6" stroke-linejoin="round" />
<polygon points="847.9,237.1 903.6,231.9 895.0,233.9 852.1,239.3" fill="#bfae50" stroke="none" stroke-width="0.6" stroke-linejoin="round" />
<polygon points="812.1,246.4 863.6,245.0 860.7,252.9 850.0,254.3 850.0,252.9 809.3,251.9" fill="#2e343c" stroke="none" stroke-width="0.6" stroke-linejoin="round" />
<polygon points="812.1,246.4 863.6,245.0 862.9,246.7 811.6,247.9" fill="#3e444c" stroke="none" stroke-width="0.6" stroke-linejoin="round" />
<polygon points="864.3,245.0 870.0,244.3 862.1,252.9 860.7,252.9" fill="#e08a10" stroke="none" stroke-width="0.6" stroke-linejoin="round" />
<polygon points="800.4,252.1 850.0,252.9 849.3,290.7 846.4,290.7 846.7,278.1 800.7,269.3" fill="#596575" stroke="none" stroke-width="0.6" stroke-linejoin="round" />
<polygon points="846.7,278.1 850.0,252.9 849.3,290.7 846.4,290.7" fill="#6a7686" stroke="none" stroke-width="0.6" stroke-linejoin="round" />
<path d="M800.4 252.1L846.7 278.1" fill="none" stroke="#3a4452" stroke-width="0.4" />
<path d="M802.1 258.1L845.0 261.6" fill="none" stroke="#3040c0" stroke-width="0.6" stroke-dasharray="0.6 3"/>
<polyline points="902.9,231.9 893.6,298.6" fill="none" stroke="#7a6a40" stroke-width="0.4" stroke-linejoin="round" />
<path d="M862.1 276.4v-4.500" fill="none" stroke="#5050d0" stroke-width="0.5" />
<path d="M862.1 276.4h-3.500" fill="none" stroke="#50b050" stroke-width="0.5" />
<path d="M862.1 276.4h3" fill="none" stroke="#d05050" stroke-width="0.5" />
<path d="M752.7 244.1H776.8L796.4 255.1" fill="none" stroke="#222" stroke-width="0.6" />
<path d="M796.4 255.1l-2.800-0.400 1-1.800z" fill="#111" stroke="#111" stroke-width="0.3" />
<text x="753.4" y="242.6" font-family="Liberation Sans" font-size="4.85" fill="#444" text-anchor="start" font-weight="normal" >BIM model</text>
<rect x="772.9" y="435.4" width="108.6" height="44.7" fill="none" stroke="#333" stroke-width="1.100" stroke-dasharray="1.800 2"/>
<text x="773.5" y="439.2" font-family="Liberation Sans" font-size="4.88" fill="#222" text-anchor="start" font-weight="bold" >Slope stability verification (Bishop)</text>
<text x="773.5" y="444.6" font-family="Liberation Sans" font-size="4.85" fill="#262626" text-anchor="start" font-weight="normal" >Sum of active forces :</text>
<text x="827.5" y="444.6" font-family="Liberation Sans" font-size="4.85" fill="#262626" text-anchor="start" font-weight="normal" >F</text>
<text x="830.5" y="445.8" font-family="Liberation Sans" font-size="3.4" fill="#262626" text-anchor="start" font-weight="normal" >a</text>
<text x="834.5" y="444.6" font-family="Liberation Sans" font-size="4.85" fill="#262626" text-anchor="start" font-weight="normal" >=</text>
<text x="860.0" y="444.6" font-family="Liberation Sans" font-size="4.85" fill="#262626" text-anchor="end" font-weight="normal" >1630,59</text>
<text x="862.6" y="444.6" font-family="Liberation Sans" font-size="4.85" fill="#262626" text-anchor="start" font-weight="normal" >kN/m</text>
<text x="773.5" y="450.6" font-family="Liberation Sans" font-size="4.85" fill="#262626" text-anchor="start" font-weight="normal" >Sum of passive forces :</text>
<text x="827.5" y="450.6" font-family="Liberation Sans" font-size="4.85" fill="#262626" text-anchor="start" font-weight="normal" >F</text>
<text x="830.5" y="451.8" font-family="Liberation Sans" font-size="3.4" fill="#262626" text-anchor="start" font-weight="normal" >p</text>
<text x="834.5" y="450.6" font-family="Liberation Sans" font-size="4.85" fill="#262626" text-anchor="start" font-weight="normal" >=</text>
<text x="860.0" y="450.6" font-family="Liberation Sans" font-size="4.85" fill="#262626" text-anchor="end" font-weight="normal" >2484,01</text>
<text x="862.6" y="450.6" font-family="Liberation Sans" font-size="4.85" fill="#262626" text-anchor="start" font-weight="normal" >kN/m</text>
<text x="773.5" y="459.3" font-family="Liberation Sans" font-size="4.85" fill="#262626" text-anchor="start" font-weight="normal" >Sliding moment :</text>
<text x="827.5" y="459.3" font-family="Liberation Sans" font-size="4.85" fill="#262626" text-anchor="start" font-weight="normal" >M</text>
<text x="831.2" y="460.5" font-family="Liberation Sans" font-size="3.4" fill="#262626" text-anchor="start" font-weight="normal" >a</text>
<text x="834.5" y="459.3" font-family="Liberation Sans" font-size="4.85" fill="#262626" text-anchor="start" font-weight="normal" >=</text>
<text x="860.0" y="459.3" font-family="Liberation Sans" font-size="4.85" fill="#262626" text-anchor="end" font-weight="normal" >33117,28</text>
<text x="862.6" y="459.3" font-family="Liberation Sans" font-size="4.85" fill="#262626" text-anchor="start" font-weight="normal" >kNm/m</text>
<text x="773.5" y="465.6" font-family="Liberation Sans" font-size="4.85" fill="#262626" text-anchor="start" font-weight="normal" >Resisting moment :</text>
<text x="827.5" y="465.6" font-family="Liberation Sans" font-size="4.85" fill="#262626" text-anchor="start" font-weight="normal" >M</text>
<text x="831.2" y="466.8" font-family="Liberation Sans" font-size="3.4" fill="#262626" text-anchor="start" font-weight="normal" >p</text>
<text x="834.5" y="465.6" font-family="Liberation Sans" font-size="4.85" fill="#262626" text-anchor="start" font-weight="normal" >=</text>
<text x="860.0" y="465.6" font-family="Liberation Sans" font-size="4.85" fill="#262626" text-anchor="end" font-weight="normal" >50450,27</text>
<text x="862.6" y="465.6" font-family="Liberation Sans" font-size="4.85" fill="#262626" text-anchor="start" font-weight="normal" >kNm/m</text>
<text x="773.5" y="472.2" font-family="Liberation Sans" font-size="4.85" fill="#262626" text-anchor="start" font-weight="normal" >Factor of safety = 1,52 ≥ 1,50</text>
<text x="773.5" y="477.6" font-family="Liberation Sans" font-size="4.86" fill="#18a018" text-anchor="start" font-weight="bold" >Slope stability ACCEPTABLE</text>
<path d="M715.6 521.5H913V568.6H715.6zM715.6 537.4H913M715.6 544.9H913M715.6 553H913M755.5 521.5V537.4M794.5 521.5V537.4M834.4 521.5V568.6M873.4 537.4V568.6" fill="none" stroke="#111" stroke-width="0.8" />
<text x="716.3" y="523.4" font-family="Liberation Sans" font-size="2.6" fill="#666" text-anchor="start" font-weight="normal" >AUTHOR:</text>
<text x="756.2" y="523.4" font-family="Liberation Sans" font-size="2.6" fill="#666" text-anchor="start" font-weight="normal" >CHECKED BY:</text>
<text x="795.2" y="523.4" font-family="Liberation Sans" font-size="2.6" fill="#666" text-anchor="start" font-weight="normal" >APPROVED BY:</text>
<text x="716.3" y="530.3" font-family="Liberation Sans" font-size="2.6" fill="#333" text-anchor="start" font-weight="normal" >ENG. BARRY</text>
<text x="756.2" y="530.3" font-family="Liberation Sans" font-size="2.6" fill="#333" text-anchor="start" font-weight="normal" >ENG. TAYLOR</text>
<text x="795.2" y="530.3" font-family="Liberation Sans" font-size="2.6" fill="#333" text-anchor="start" font-weight="normal" >ENG. WILSON</text>
<text x="716.3" y="540.9" font-family="Liberation Sans" font-size="2.6" fill="#333" text-anchor="start" font-weight="normal" >CLIENT: BUILDERS: RETAINING WALL FOR RAILWAY STRUCTURE SO4</text>
<text x="835.2" y="540.9" font-family="Liberation Sans" font-size="2.6" fill="#333" text-anchor="start" font-weight="normal" >NUMBER: 01</text>
<text x="874.2" y="540.9" font-family="Liberation Sans" font-size="2.6" fill="#333" text-anchor="start" font-weight="normal" >SCALE 1:50</text>
<text x="716.3" y="548.9" font-family="Liberation Sans" font-size="2.6" fill="#333" text-anchor="start" font-weight="normal" >DESIGNER: ENG. BROWN</text>
<text x="835.2" y="548.9" font-family="Liberation Sans" font-size="2.6" fill="#333" text-anchor="start" font-weight="normal" >JOB: 7/2006</text>
<text x="874.2" y="548.9" font-family="Liberation Sans" font-size="2.6" fill="#333" text-anchor="start" font-weight="normal" >FORMAT: A3</text>
<text x="716.3" y="554.9" font-family="Liberation Sans" font-size="2.6" fill="#666" text-anchor="start" font-weight="normal" >ATTACHMENT:</text>
<text x="716.3" y="560.9" font-family="Liberation Sans" font-size="2.6" fill="#333" text-anchor="start" font-weight="normal" >SECTION OF THE EXCAVATION PIT</text>
<text x="835.2" y="560.4" font-family="Liberation Sans" font-size="2.6" fill="#333" text-anchor="start" font-weight="normal" >PROJECT/STAGE: 03</text>
<path d="M840 528.300q3-3 7-1l-1 2q-3-1-5 0.500z" fill="#2a7a2a" stroke="#2a7a2a" stroke-width="0.3" />
<path d="M838.500 531h10l-1 1.800h-8z" fill="#e0a020" stroke="#e0a020" stroke-width="0.3" />
<path d="M841 533.500h5l-2.500 2.200z" fill="#2a7a2a" stroke="#2a7a2a" stroke-width="0.3" />
</g>
</svg>
</div>
</body></html>
